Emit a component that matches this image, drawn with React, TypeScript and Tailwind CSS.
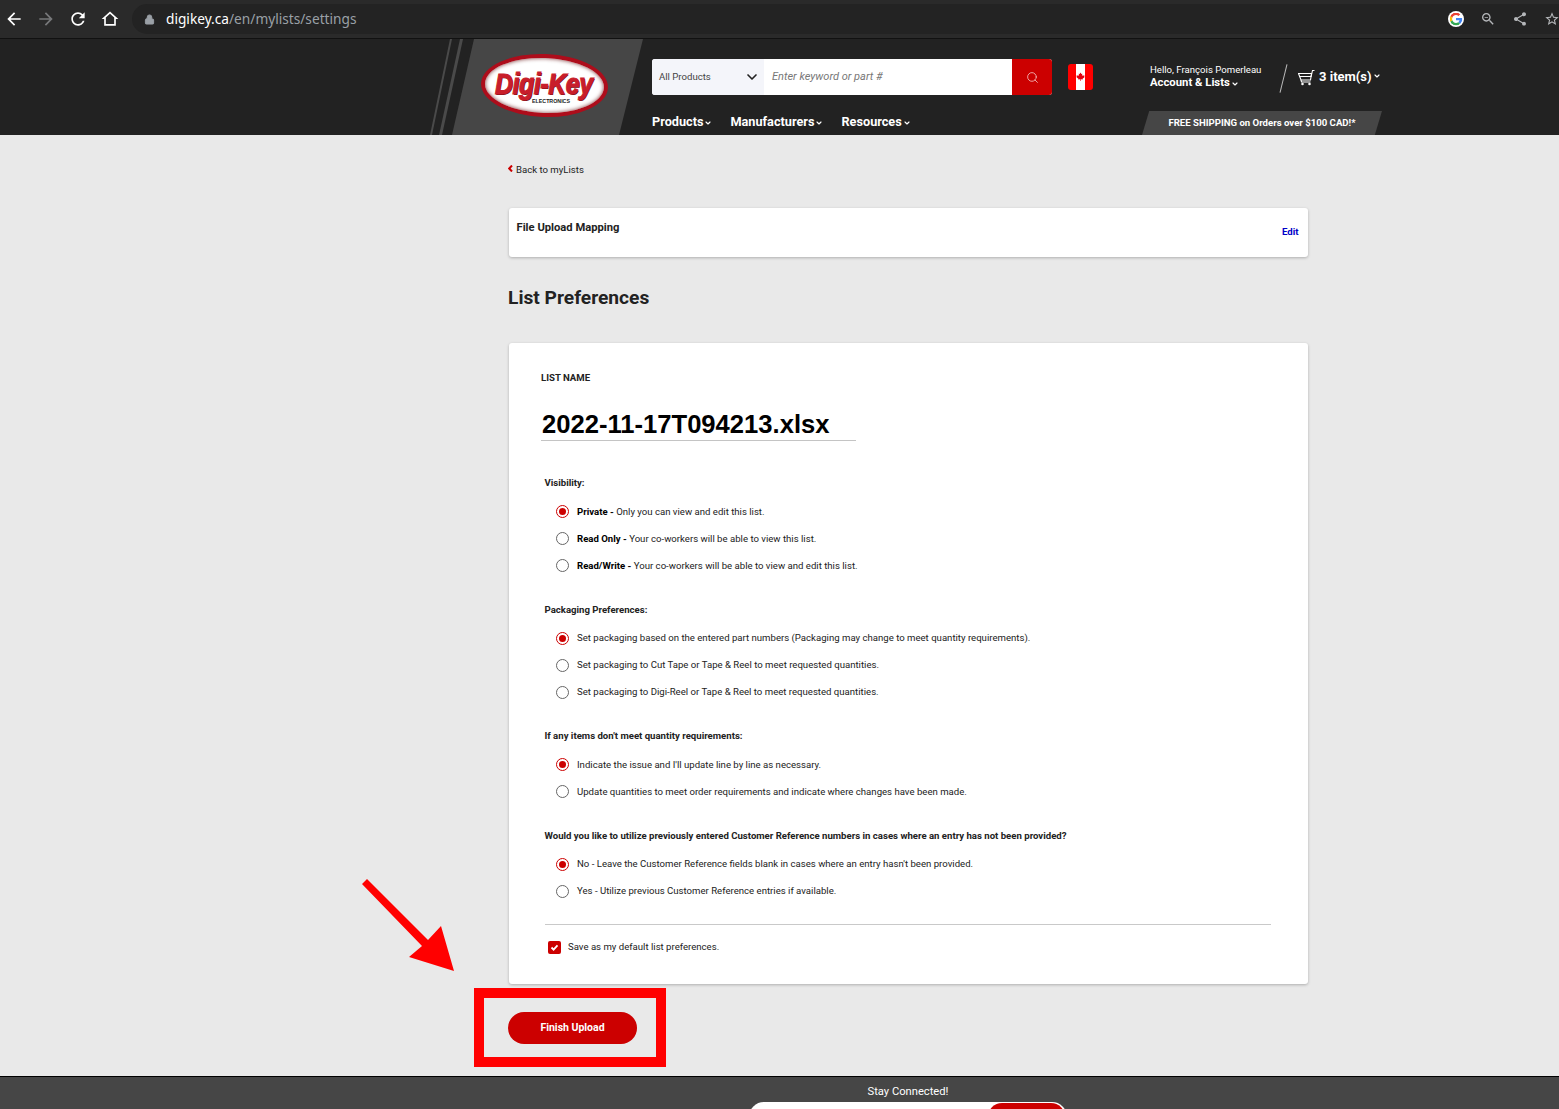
import { ChevronDown, Lock, Search } from "lucide-react";

const Radio = ({ checked = false }: { checked?: boolean }) => (
  <span className={`mb-px flex h-[13px] w-[13px] shrink-0 items-center justify-center rounded-full border bg-white ${checked ? "border-[#cc0000]" : "border-[#666]"}`}>
    {checked && <span className="h-[7px] w-[7px] rounded-full bg-[#cc0000]" />}
  </span>
);

const Option = ({ checked, bold, text }: { checked?: boolean; bold?: string; text: string }) => (
  <div className="flex h-[27px] items-center gap-[8px] pl-[11px] text-[9.6px] text-[#222]">
    <Radio checked={checked} />
    <span className="whitespace-nowrap pl-[0.5px]">
      {bold && <b className="font-bold text-black">{bold} - </b>}
      {text}
    </span>
  </div>
);

const Group = ({ title, children }: { title: string; children: React.ReactNode }) => (
  <div>
    <div className="mb-[6.5px] h-[19px] text-[9.6px] leading-[19px] font-bold text-[#222]">{title}</div>
    {children}
  </div>
);

const Logo = () => (
  <div className="relative h-[63px] w-[127px]">
    <div className="absolute inset-0 rotate-[2deg] rounded-[50%] border-[4px] border-[#ad0d1b] bg-white shadow-[inset_0_0_4px_rgba(90,0,0,0.8)]" />
    <span className="absolute top-[18px] left-[14px] origin-left [transform:scaleX(0.83)] font-['Liberation_Sans',sans-serif] text-[30px] leading-[24px] font-bold tracking-[-0.5px] whitespace-nowrap text-[#c81e2b] italic [-webkit-text-stroke:1.2px_#c81e2b] [text-shadow:1px_1px_0_#5c0a10]">
      Digi-Key
    </span>
    <span className="absolute top-[44px] left-[51px] font-['Liberation_Sans',sans-serif] text-[5.3px] leading-[6px] font-bold whitespace-nowrap text-[#222]">ELECTRONICS</span>
  </div>
);

const Flag = () => (
  <svg width="25" height="26" viewBox="0 0 25 26" className="rounded-[3px]">
    <rect width="25" height="26" fill="#ff0000" />
    <rect x="8" width="9" height="26" fill="#fff" />
    <path d="M12.5 8.5l.9 1.6.9-.4-.4 2.2 1.2-1 .3.8 1.2-.2-.4 1.3.5.3-2.1 1.7.2.8-2-.3v1.7h-.6v-1.7l-2 .3.2-.8-2.1-1.7.5-.3-.4-1.3 1.2.2.3-.8 1.2 1-.4-2.2.9.4z" fill="#e4000f" />
  </svg>
);

const GoogleIcon = () => (
  <svg width="16" height="16" viewBox="0 0 48 48" className="rounded-full bg-white p-[1.5px]">
    <path fill="#EA4335" d="M24 9.5c3.5 0 6.7 1.2 9.2 3.6l6.9-6.9C35.9 2.4 30.5 0 24 0 14.6 0 6.5 5.4 2.6 13.2l8 6.2C12.5 13.7 17.8 9.5 24 9.5z" />
    <path fill="#4285F4" d="M46.98 24.55c0-1.57-.15-3.09-.38-4.55H24v9.02h12.94c-.58 2.96-2.26 5.48-4.78 7.18l7.73 6C44.4 38.02 46.98 31.85 46.98 24.55z" />
    <path fill="#FBBC05" d="M10.53 28.59c-.48-1.45-.76-2.99-.76-4.59s.27-3.14.76-4.59l-7.98-6.19C.92 16.46 0 20.12 0 24c0 3.88.92 7.54 2.56 10.78l7.97-6.19z" />
    <path fill="#34A853" d="M24 48c6.48 0 11.93-2.13 15.89-5.81l-7.73-6c-2.15 1.45-4.92 2.3-8.16 2.3-6.26 0-11.57-4.22-13.47-9.91l-7.98 6.19C6.51 42.62 14.62 48 24 48z" />
  </svg>
);

const BarIcon = ({ d, size = 18, className = "" }: { d: string; size?: number; className?: string }) => (
  <svg width={size} height={size} viewBox="0 0 24 24" fill="currentColor" fillRule="evenodd" className={`shrink-0 ${className}`}>
    <path d={d} />
  </svg>
);

const ARROW_BACK = "M20 11H7.83l5.59-5.59L12 4l-8 8 8 8 1.41-1.41L7.83 13H20v-2z";
const ARROW_FORWARD = "M4 11h12.17l-5.59-5.59L12 4l8 8-8 8-1.41-1.41L16.17 13H4v-2z";
const REFRESH = "M17.65 6.35C16.2 4.9 14.21 4 12 4c-4.42 0-7.99 3.58-7.99 8s3.57 8 7.99 8c3.73 0 6.84-2.55 7.73-6h-2.08c-.82 2.33-3.04 4-5.65 4-3.31 0-6-2.69-6-6s2.69-6 6-6c1.66 0 3.14.69 4.22 1.78L13 11h7V4l-2.35 2.35z";
const HOME = "M12 3L2 12h3v8h14v-8h3L12 3zM12 5.7l5 4.5V18H7v-7.8l5-4.5z";
const ZOOM_OUT = "M15.5 14h-.79l-.28-.27C15.41 12.59 16 11.11 16 9.5 16 5.91 13.09 3 9.5 3S3 5.91 3 9.5 5.91 16 9.5 16c1.61 0 3.09-.59 4.23-1.57l.27.28v.79l5 4.99L20.49 19l-4.99-5zm-6 0C7.01 14 5 11.99 5 9.5S7.01 5 9.5 5 14 7.01 14 9.5 11.99 14 9.5 14zM7 9h5v1H7z";
const SHARE = "M18 16.08c-.76 0-1.44.3-1.96.77L8.91 12.7c.05-.23.09-.46.09-.7s-.04-.47-.09-.7l7.05-4.11c.54.5 1.25.81 2.04.81 1.66 0 3-1.34 3-3s-1.34-3-3-3-3 1.34-3 3c0 .24.04.47.09.7L8.04 9.81C7.5 9.31 6.79 9 6 9c-1.66 0-3 1.34-3 3s1.34 3 3 3c.79 0 1.5-.31 2.04-.81l7.12 4.16c-.05.21-.08.43-.08.65 0 1.61 1.31 2.92 2.92 2.92 1.61 0 2.92-1.31 2.92-2.92s-1.31-2.92-2.92-2.92z";
const STAR = "M22 9.24l-7.19-.62L12 2 9.19 8.63 2 9.24l5.46 4.73L5.82 21 12 17.27 18.18 21l-1.63-7.03L22 9.24zM12 15.4l-3.76 2.27 1-4.28-3.32-2.88 4.38-.38L12 6.1l1.71 4.04 4.38.38-3.32 2.88 1 4.28L12 15.4z";

export default function App() {
  return (
    <div className="relative flex h-[1109px] w-[1559px] flex-col overflow-hidden bg-[#e9e9e9] font-['Roboto',sans-serif]">
      {/* Browser bar */}
      <div className="flex h-[39px] shrink-0 items-center border-b border-[#111] bg-[#2a2a2a] pl-[4px]">
        <div className="flex items-center gap-[12px] text-white">
          <BarIcon d={ARROW_BACK} size={20} />
          <BarIcon d={ARROW_FORWARD} size={20} className="text-[#77787a]" />
          <BarIcon d={REFRESH} size={20} />
          <BarIcon d={HOME} size={20} />
        </div>
        <div className="ml-[12px] flex h-[30px] flex-1 items-center rounded-l-[15px] bg-[#232323] pl-[12px]">
          <Lock size={11} fill="#9aa0a6" className="text-[#9aa0a6]" />
          <span className="ml-[11px] font-['Noto_Sans',sans-serif] text-[13.7px] text-[#9aa0a6]">
            <span className="text-white">digikey.ca</span>/en/mylists/settings
          </span>
          <div className="mr-[-1px] ml-auto flex items-center gap-[16px] text-[#b5b7ba]">
            <GoogleIcon />
            <BarIcon d={ZOOM_OUT} size={16} />
            <BarIcon d={SHARE} size={16} />
            <BarIcon d={STAR} size={16} />
          </div>
        </div>
      </div>

      {/* Site header */}
      <header className="flex h-[96px] shrink-0 bg-[#222222] pl-[430px]">
        <div className="relative h-[96px] w-[222px] shrink-0">
          <svg width="213" height="96" viewBox="0 0 213 96" className="absolute inset-0">
            <path d="M0 96L20 0H22L2 96Z" fill="#4a4a4a" />
            <path d="M9 96L30 0H33L12 96Z" fill="#4a4a4a" />
            <path d="M22 96L44 0H213L189 96Z" fill="#464646" />
          </svg>
          <div className="absolute top-[15px] left-[51px]">
            <Logo />
          </div>
        </div>
        <div className="w-[498px] shrink-0">
          <div className="mt-[20px] flex h-[36px] items-center">
            <div className="flex h-[36px] w-[400px] overflow-hidden rounded-[3px] bg-white">
              <div className="flex w-[112px] items-center justify-between bg-[#f4f5fa] pr-[4px] pl-[7px] text-[9.6px] text-[#444]">
                All Products
                <ChevronDown size={16} strokeWidth={2.5} className="text-[#222]" />
              </div>
              <div className="flex w-[248px] items-center pl-[8px] text-[11px] text-[#777] italic">Enter keyword or part #</div>
              <div className="flex w-[40px] items-center justify-center bg-[#cc0000] text-[#f5c6c6]">
                <Search size={13} strokeWidth={1.5} />
              </div>
            </div>
            <div className="ml-[16px]">
              <Flag />
            </div>
          </div>
          <nav className="mt-[19px] flex gap-[18px] text-[12.7px] leading-[16px] font-bold text-white">
            {["Products", "Manufacturers", "Resources"].map((n) => (
              <span key={n} className="flex items-center gap-[1px]">
                {n}
                <ChevronDown size={8} strokeWidth={3.5} className="mt-[2px]" />
              </span>
            ))}
          </nav>
        </div>
        <div className="relative flex-1">
          <div className="mt-[25px] text-[9.6px] leading-[12px] text-white">Hello, François Pomerleau</div>
          <div className="flex items-center gap-[1px] text-[11.3px] leading-[13px] font-bold text-white">
            Account &amp; Lists
            <ChevronDown size={8} strokeWidth={3.5} className="mt-[2px]" />
          </div>
          <div className="absolute top-[25px] left-[133px] h-[29px] w-px rotate-[14deg] bg-[#bbb]" />
          <div className="absolute top-[28px] left-[148px] flex items-center gap-[4px] text-[13px] leading-[20px] font-bold text-white">
            <svg width="17" height="17" viewBox="0 0 17 17" fill="none" stroke="currentColor" strokeWidth="1.1">
              <path d="M0.5 4.5H13.5L12.5 11H3Z" />
              <path d="M1.5 7.5H13M3 11L3.5 13H12.5M13 8L14.5 1.5H16.5" />
              <circle cx="4.5" cy="15" r="0.7" fill="currentColor" />
              <circle cx="11.5" cy="15" r="0.7" fill="currentColor" />
            </svg>
            3 item(s)
            <ChevronDown size={8} strokeWidth={3.5} className="mb-[3px] ml-[-3px]" />
          </div>
          <div className="absolute top-[72px] left-[-8px] flex h-[24px] w-[240px] items-center justify-center bg-[#464646] text-[9.6px] font-bold whitespace-nowrap text-white [clip-path:polygon(3%_0,100%_0,97%_100%,0_100%)]">
            FREE SHIPPING on Orders over $100 CAD!*
          </div>
        </div>
      </header>

      {/* Main */}
      <main className="ml-[508px] flex w-[800px] flex-1 flex-col">
        <div className="mt-[28px] flex h-[14px] items-center gap-[3px] text-[9.6px] text-[#222]">
          <svg width="5" height="7" viewBox="0 0 5 7" className="mb-[3px]">
            <path d="M4 0.5L1.2 3.5L4 6.5" fill="none" stroke="#cc0000" strokeWidth="2" />
          </svg>
          Back to myLists
        </div>

        <section className="mx-[0.5px] mt-[31px] flex h-[49px] items-start justify-between rounded-[3px] bg-white pt-[13px] pr-[9px] pl-[8px] shadow-[0_1px_3px_rgba(0,0,0,0.25)]">
          <h3 className="text-[11.2px] leading-[14px] font-bold text-[#222]">File Upload Mapping</h3>
          <a className="mt-[5px] text-[9.6px] leading-[12px] font-bold text-[#0000c8]">Edit</a>
        </section>

        <h2 className="mt-[29px] text-[19.2px] leading-[24px] font-bold text-[#222]">List Preferences</h2>

        <section className="mx-[0.5px] mt-[33px] h-[641px] rounded-[3px] bg-white pt-[28px] pr-[36.5px] pl-[32.5px] shadow-[0_1px_3px_rgba(0,0,0,0.25)]">
          <div className="text-[9.6px] leading-[14px] font-bold text-[#222]">LIST NAME</div>
          <div className="mt-[23px] h-[33px] w-[315px] border-b border-[#c4c4c4] pl-[1px] font-['Liberation_Sans',sans-serif] text-[25.6px] leading-[33px] font-bold text-black">
            2022-11-17T094213.xlsx
          </div>
          <div className="mt-[32px] flex flex-col gap-[20px] pl-[3.5px]">
            <Group title="Visibility:">
              <Option checked bold="Private" text="Only you can view and edit this list." />
              <Option bold="Read Only" text="Your co-workers will be able to view this list." />
              <Option bold="Read/Write" text="Your co-workers will be able to view and edit this list." />
            </Group>
            <Group title="Packaging Preferences:">
              <Option checked text="Set packaging based on the entered part numbers (Packaging may change to meet quantity requirements)." />
              <Option text="Set packaging to Cut Tape or Tape & Reel to meet requested quantities." />
              <Option text="Set packaging to Digi-Reel or Tape & Reel to meet requested quantities." />
            </Group>
            <Group title="If any items don't meet quantity requirements:">
              <Option checked text="Indicate the issue and I'll update line by line as necessary." />
              <Option text="Update quantities to meet order requirements and indicate where changes have been made." />
            </Group>
            <Group title="Would you like to utilize previously entered Customer Reference numbers in cases where an entry has not been provided?">
              <Option checked text="No - Leave the Customer Reference fields blank in cases where an entry hasn't been provided." />
              <Option text="Yes - Utilize previous Customer Reference entries if available." />
            </Group>
          </div>
          <div className="mt-[19px] ml-[3.5px] h-px bg-[#c9c9c9]" />
          <label className="mt-[15px] ml-[6.5px] flex items-center gap-[7.5px] text-[9.6px] text-[#222]">
            <span className="flex h-[13px] w-[13px] items-center justify-center rounded-[2px] bg-[#cc0000]">
              <svg width="9" height="9" viewBox="0 0 9 9">
                <path d="M1.5 4.5L3.6 6.6L7.5 2.4" fill="none" stroke="#fff" strokeWidth="1.8" />
              </svg>
            </span>
            Save as my default list preferences.
          </label>
        </section>

        <button className="mt-[28px] h-[32px] w-[129px] rounded-full bg-[#cc0000] text-[10.5px] font-bold text-white">Finish Upload</button>
      </main>

      {/* Footer */}
      <footer className="h-[33px] shrink-0 overflow-hidden border-t border-black bg-[#464646]">
        <div className="ml-[508px] flex w-[800px] flex-col items-center">
          <div className="mt-[8px] h-[14px] text-[11.2px] leading-[14px] text-white">Stay Connected!</div>
          <div className="mt-[3px] flex h-[30px] w-[318px] justify-end overflow-hidden rounded-[15px] bg-white pt-[1px] pr-[2px]">
            <div className="h-[28px] w-[77px] rounded-[14px] bg-[#cc0000]" />
          </div>
        </div>
      </footer>

      {/* Annotations */}
      <svg width="100" height="100" viewBox="0 0 100 100" className="absolute top-[878px] left-[360px]">
        <path d="M2 6L7 1L68 62L81 48L94 93L49 79L62 68Z" fill="#ff0000" />
      </svg>
      <div className="absolute top-[988px] left-[474px] h-[79px] w-[192px] border-[10px] border-[#ff0000]" />
    </div>
  );
}
